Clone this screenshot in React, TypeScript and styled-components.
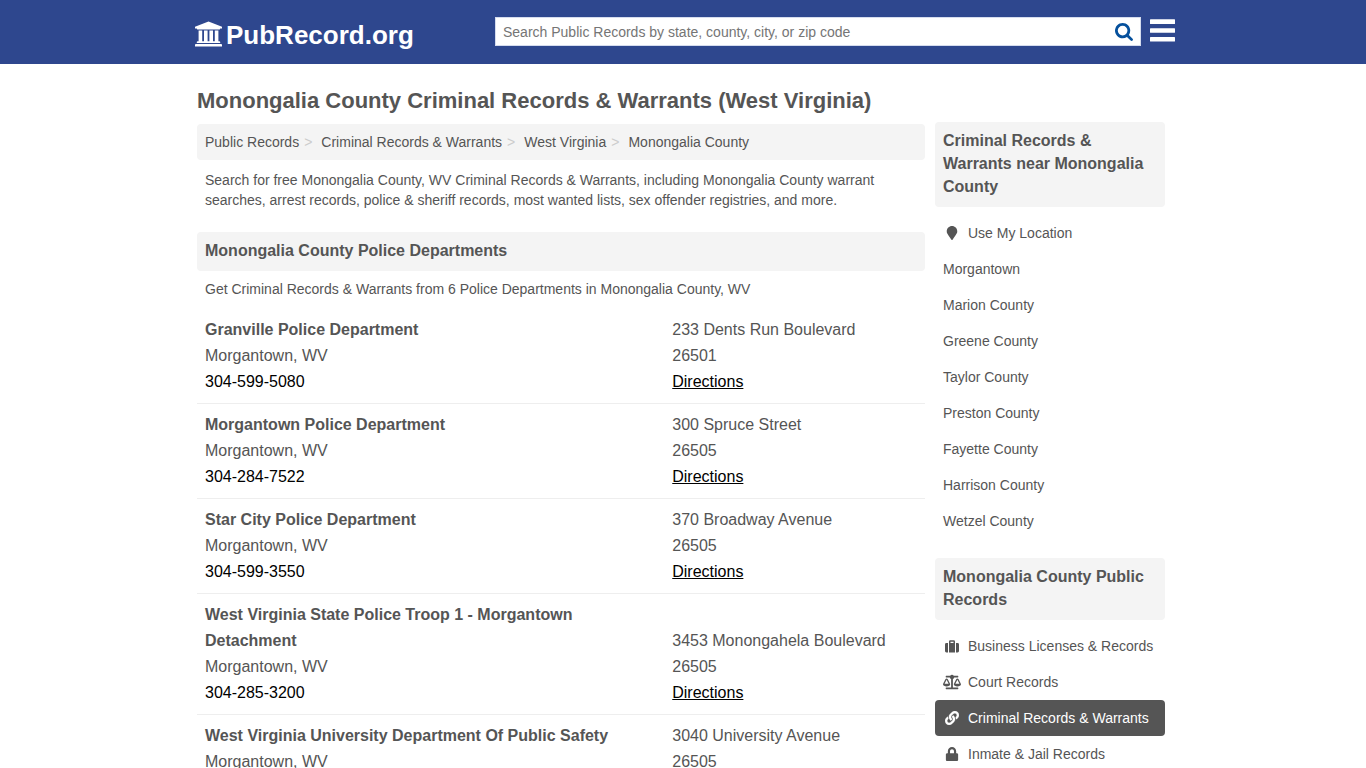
import React from "react";
import styled, { createGlobalStyle } from "styled-components";
import { FaBalanceScale, FaLink, FaLock, FaMapMarker } from "react-icons/fa";

const GlobalStyle = createGlobalStyle`
  *, *::before, *::after { box-sizing: border-box; }
  body {
    margin: 0;
    background: #fff;
    color: #555;
    font-family: "Liberation Sans", Arial, Helvetica, sans-serif;
    font-size: 14px;
    line-height: 20px;
  }
  a { color: inherit; text-decoration: none; }
  h1, h2, h3, p, ul, ol { margin: 0; padding: 0; }
  ul, ol { list-style: none; }
`;

const Header = styled.header`
  background: #2e478e;
`;

const HeaderInner = styled.div`
  display: flex;
  align-items: flex-start;
  max-width: 984px;
  height: 64px;
  margin: 0 auto;
  padding: 17px 0 0 4px;
`;

const Logo = styled.a`
  display: flex;
  align-items: center;
  gap: 4px;
  flex: 0 0 300px;
  padding-top: 3px;
  color: #fff;
  font-size: 26px;
  font-weight: bold;
  line-height: 30px;

  svg { margin-bottom: 3px; }
`;

const SearchForm = styled.form`
  display: flex;
  flex: 1;
  height: 29px;
  background: #fff;
  border: 1px solid #d5dcee;
`;

const SearchInput = styled.input`
  flex: 1;
  min-width: 0;
  padding: 0 7px;
  border: 0;
  outline: 0;
  background: transparent;
  color: #555;
  font: inherit;

  &::placeholder { color: #757575; opacity: 1; }
`;

const IconButton = styled.button`
  display: flex;
  align-items: center;
  padding: 0;
  border: 0;
  background: transparent;
  cursor: pointer;
`;

const SearchButton = styled(IconButton)`
  padding: 0 7px;
  color: #05509c;
`;

const MenuButton = styled(IconButton)`
  margin-left: 9px;
  padding-top: 2px;
  color: #fff;
`;

const Page = styled.div`
  max-width: 980px;
  margin: 0 auto;
  padding: 23px 8px 0 4px;
`;

const Title = styled.h1`
  margin-bottom: 7px;
  font-size: 22px;
  line-height: 28px;
`;

const Columns = styled.div`
  display: grid;
  grid-template-columns: minmax(0, 1fr) 230px;
  gap: 10px;
  align-items: start;
`;

const Main = styled.main`
  padding-top: 2px;
`;

const Breadcrumbs = styled.ol`
  display: flex;
  flex-wrap: wrap;
  padding: 8px;
  border-radius: 4px;
  background: #f4f4f4;
`;

const Crumb = styled.li`
  &:not(:last-child)::after {
    content: ">";
    margin: 0 9px 0 5px;
    color: #ccc;
  }
`;

const Text = styled.p`
  padding: 10px 8px;
`;

const SectionTitle = styled.h2`
  padding: 7px 8px 9px;
  border-radius: 4px;
  background: #f4f4f4;
  font-size: 16px;
  line-height: 23px;
`;

const Section = styled.section`
  margin-top: 12px;

  ${Text} { padding: 8px 8px 10px; }
`;

const Department = styled.li`
  display: grid;
  grid-template-columns: 21fr 11fr;
  align-items: end;
  padding: 8px;
  border-bottom: 1px solid #eee;
  font-size: 16px;
  line-height: 26px;
`;

const Cell = styled.div`
  padding-right: 8px;
`;

const Name = styled.h3`
  font-size: 16px;
  line-height: 26px;
`;

const ActionLink = styled.a<{ $underlined?: boolean }>`
  color: #000;
  text-decoration: ${(p) => (p.$underlined ? "underline" : "none")};
`;

const SideSection = styled.section`
  & + & { margin-top: 19px; }
`;

const SideList = styled.ul`
  margin-top: 8px;
`;

const SideLink = styled.a<{ $active?: boolean }>`
  display: flex;
  align-items: center;
  gap: 7px;
  padding: 8px;
  border-radius: 4px;
  white-space: nowrap;
  background: ${(p) => (p.$active ? "#555" : "transparent")};
  color: ${(p) => (p.$active ? "#fff" : "inherit")};
`;

const SideIcon = styled.span`
  display: flex;
  justify-content: center;
  width: 18px;
`;

function BankIcon() {
  return (
    <svg width="27" height="26" viewBox="0 0 1920 1792" fill="currentColor" aria-hidden="true">
      <path d="M960 0l960 384v128h-128q0 26-20.5 45t-48.5 19h-1526q-28 0-48.5-19t-20.5-45h-128v-128zM256 640h256v768h128v-768h256v768h128v-768h256v768h128v-768h256v768h59q28 0 48.5 19t20.5 45v64h-1664v-64q0-26 20.5-45t48.5-19h59v-768zM1851 1600q28 0 48.5 19t20.5 45v128h-1920v-128q0-26 20.5-45t48.5-19h1782z" />
    </svg>
  );
}

function SearchIcon() {
  return (
    <svg width="18" height="18" viewBox="0 128 1664 1664" fill="currentColor" aria-hidden="true">
      <path d="M1152 832q0-185-131.5-316.5t-316.5-131.5-316.5 131.5-131.5 316.5 131.5 316.5 316.5 131.5 316.5-131.5 131.5-316.5zm512 832q0 52-38 90t-90 38q-54 0-90-38l-343-342q-179 124-399 124-143 0-273.5-55.5t-225-150-150-225-55.5-273.5 55.5-273.5 150-225 225-150 273.5-55.5 273.5 55.5 225 150 150 225 55.5 273.5q0 220-124 399l343 343q37 37 37 90z" />
    </svg>
  );
}

function MenuIcon() {
  return (
    <svg width="25" height="23" viewBox="0 0 25 23" fill="currentColor" aria-hidden="true">
      <rect y="0.3" width="25" height="4.6" rx="0.5" />
      <rect y="9.2" width="25" height="4.6" rx="0.5" />
      <rect y="18" width="25" height="4.6" rx="0.5" />
    </svg>
  );
}

function SuitcaseIcon() {
  return (
    <svg width="14" height="13" viewBox="0 0 14 13" fill="currentColor" aria-hidden="true">
      <path d="M3 3v9.5H1.4A1.4 1.4 0 0 1 0 11.1V4.4A1.4 1.4 0 0 1 1.4 3zM11 3h1.6A1.4 1.4 0 0 1 14 4.4v6.7a1.4 1.4 0 0 1-1.4 1.4H11z" />
      <path d="M4 12.5V1.4A1.2 1.2 0 0 1 5.2.2h3.6A1.2 1.2 0 0 1 10 1.4v11.1zM5.5 1.7V3h3V1.7z" fillRule="evenodd" />
    </svg>
  );
}

const crumbs = ["Public Records", "Criminal Records & Warrants", "West Virginia", "Monongalia County"];

const departments = [
  { name: "Granville Police Department", phone: "304-599-5080", street: "233 Dents Run Boulevard", zip: "26501" },
  { name: "Morgantown Police Department", phone: "304-284-7522", street: "300 Spruce Street", zip: "26505" },
  { name: "Star City Police Department", phone: "304-599-3550", street: "370 Broadway Avenue", zip: "26505" },
  {
    name: "West Virginia State Police Troop 1 - Morgantown Detachment",
    phone: "304-285-3200",
    street: "3453 Monongahela Boulevard",
    zip: "26505",
  },
  {
    name: "West Virginia University Department Of Public Safety",
    phone: "",
    street: "3040 University Avenue",
    zip: "26505",
  },
];

type SideItem = { label: string; icon?: React.ReactNode; active?: boolean };

const nearby: SideItem[] = [
  { label: "Use My Location", icon: <FaMapMarker size={14} /> },
  { label: "Morgantown" },
  { label: "Marion County" },
  { label: "Greene County" },
  { label: "Taylor County" },
  { label: "Preston County" },
  { label: "Fayette County" },
  { label: "Harrison County" },
  { label: "Wetzel County" },
];

const recordTypes: SideItem[] = [
  { label: "Business Licenses & Records", icon: <SuitcaseIcon /> },
  { label: "Court Records", icon: <FaBalanceScale size={18} /> },
  { label: "Criminal Records & Warrants", icon: <FaLink size={14} strokeWidth={10} />, active: true },
  { label: "Inmate & Jail Records", icon: <FaLock size={14} /> },
];

function SideNav({ title, items }: { title: string; items: SideItem[] }) {
  return (
    <SideSection>
      <SectionTitle>{title}</SectionTitle>
      <SideList>
        {items.map((item) => (
          <li key={item.label}>
            <SideLink href="#" $active={item.active} aria-current={item.active ? "page" : undefined}>
              {item.icon && <SideIcon>{item.icon}</SideIcon>}
              {item.label}
            </SideLink>
          </li>
        ))}
      </SideList>
    </SideSection>
  );
}

export default function App() {
  return (
    <>
      <GlobalStyle />
      <Header>
        <HeaderInner>
          <Logo href="#">
            <BankIcon />
            PubRecord.org
          </Logo>
          <SearchForm role="search" onSubmit={(e) => e.preventDefault()}>
            <SearchInput
              type="text"
              aria-label="Search Public Records"
              placeholder="Search Public Records by state, county, city, or zip code"
            />
            <SearchButton type="submit" aria-label="Search">
              <SearchIcon />
            </SearchButton>
          </SearchForm>
          <MenuButton type="button" aria-label="Menu">
            <MenuIcon />
          </MenuButton>
        </HeaderInner>
      </Header>
      <Page>
        <Title>Monongalia County Criminal Records &amp; Warrants (West Virginia)</Title>
        <Columns>
          <Main>
            <nav aria-label="Breadcrumb">
              <Breadcrumbs>
                {crumbs.map((crumb) => (
                  <Crumb key={crumb}>
                    <a href="#">{crumb}</a>
                  </Crumb>
                ))}
              </Breadcrumbs>
            </nav>
            <Text>
              Search for free Monongalia County, WV Criminal Records &amp; Warrants, including Monongalia County
              warrant searches, arrest records, police &amp; sheriff records, most wanted lists, sex offender
              registries, and more.
            </Text>
            <Section>
              <SectionTitle>Monongalia County Police Departments</SectionTitle>
              <Text>Get Criminal Records &amp; Warrants from 6 Police Departments in Monongalia County, WV</Text>
              <ul>
                {departments.map((d) => (
                  <Department key={d.name}>
                    <Cell>
                      <Name>
                        <a href="#">{d.name}</a>
                      </Name>
                      <div>Morgantown, WV</div>
                      {d.phone && <ActionLink href={`tel:${d.phone}`}>{d.phone}</ActionLink>}
                    </Cell>
                    <Cell>
                      <div>{d.street}</div>
                      <div>{d.zip}</div>
                      {d.phone && (
                        <ActionLink href="#" $underlined>
                          Directions
                        </ActionLink>
                      )}
                    </Cell>
                  </Department>
                ))}
              </ul>
            </Section>
          </Main>
          <aside>
            <SideNav title="Criminal Records & Warrants near Monongalia County" items={nearby} />
            <SideNav title="Monongalia County Public Records" items={recordTypes} />
          </aside>
        </Columns>
      </Page>
    </>
  );
}
